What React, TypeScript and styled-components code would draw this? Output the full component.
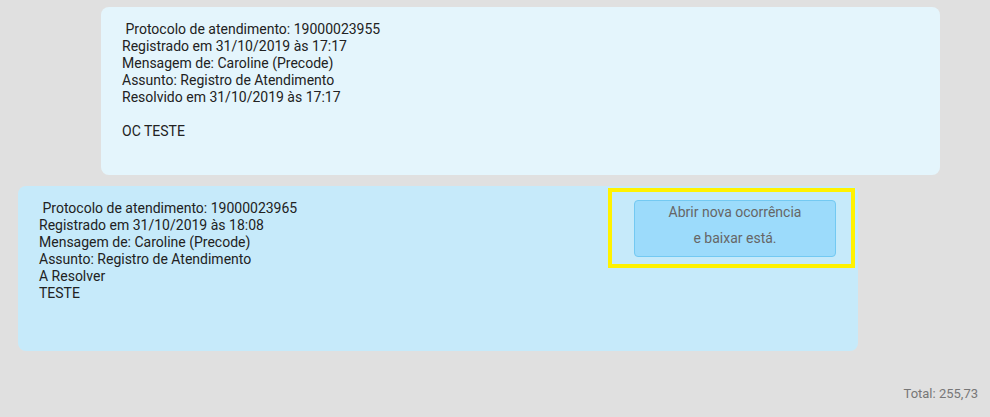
import React from 'react';
import styled, { createGlobalStyle } from 'styled-components';

const GlobalStyle = createGlobalStyle`
  html, body {
    margin: 0;
    padding: 0;
    background: #e0e0e0;
  }
  body {
    font-family: Roboto, 'Liberation Sans', sans-serif;
    font-size: 14px;
    color: #222;
  }
`;

const Page = styled.div`
  width: 990px;
  height: 417px;
  box-sizing: border-box;
  padding-top: 7px;
  display: flex;
  flex-direction: column;
  overflow: hidden;
`;

const Bubble = styled.div<{ $resolved?: boolean }>`
  box-sizing: border-box;
  display: flex;
  justify-content: space-between;
  align-items: flex-start;
  border-radius: 8px;
  background: ${(p) => (p.$resolved ? '#e4f5fc' : '#c6eafa')};
  margin-left: ${(p) => (p.$resolved ? '101px' : '18px')};
  width: ${(p) => (p.$resolved ? '839px' : '840px')};
  height: ${(p) => (p.$resolved ? '168px' : '165px')};
  margin-top: ${(p) => (p.$resolved ? '0' : '11px')};
`;

const MessageText = styled.div`
  padding: 14px 21px;
  line-height: 17px;
  white-space: pre-wrap;
`;

const ActionFrame = styled.div`
  box-sizing: border-box;
  margin: 2px 3px 0 0;
  width: 247px;
  height: 80px;
  border: 4px solid #fff200;
  padding: 8px 15px 0 22px;
`;

const ActionButton = styled.button`
  box-sizing: border-box;
  display: flex;
  flex-direction: column;
  justify-content: center;
  align-items: center;
  width: 202px;
  height: 57px;
  border: 1px solid #73c9f2;
  border-radius: 4px;
  background: #9cdbfb;
  color: #666;
  font-family: Roboto, 'Liberation Sans', sans-serif;
  font-size: 14px;
  line-height: 26px;
  padding: 0 0 7px;
  cursor: pointer;
`;

const Footer = styled.div`
  margin-top: auto;
  padding: 0 12px 15px 0;
  text-align: right;
  color: #777;
  font-size: 13px;
  line-height: 17px;
`;

const messages = [
  {
    id: 1,
    resolved: true,
    text: ' Protocolo de atendimento: 19000023955\nRegistrado em 31/10/2019 às 17:17\nMensagem de: Caroline (Precode)\nAssunto: Registro de Atendimento\nResolvido em 31/10/2019 às 17:17\n\nOC TESTE',
  },
  {
    id: 2,
    resolved: false,
    text: ' Protocolo de atendimento: 19000023965\nRegistrado em 31/10/2019 às 18:08\nMensagem de: Caroline (Precode)\nAssunto: Registro de Atendimento\nA Resolver\nTESTE',
  },
];

function App() {
  return (
    <>
      <GlobalStyle />
      <Page>
        {messages.map((m) => (
          <Bubble key={m.id} $resolved={m.resolved}>
            <MessageText>{m.text}</MessageText>
            {!m.resolved && (
              <ActionFrame>
                <ActionButton type="button">
                  <span>Abrir nova ocorrência</span>
                  <span>e baixar está.</span>
                </ActionButton>
              </ActionFrame>
            )}
          </Bubble>
        ))}
        <Footer>Total: 255,73</Footer>
      </Page>
    </>
  );
}

export default App;
